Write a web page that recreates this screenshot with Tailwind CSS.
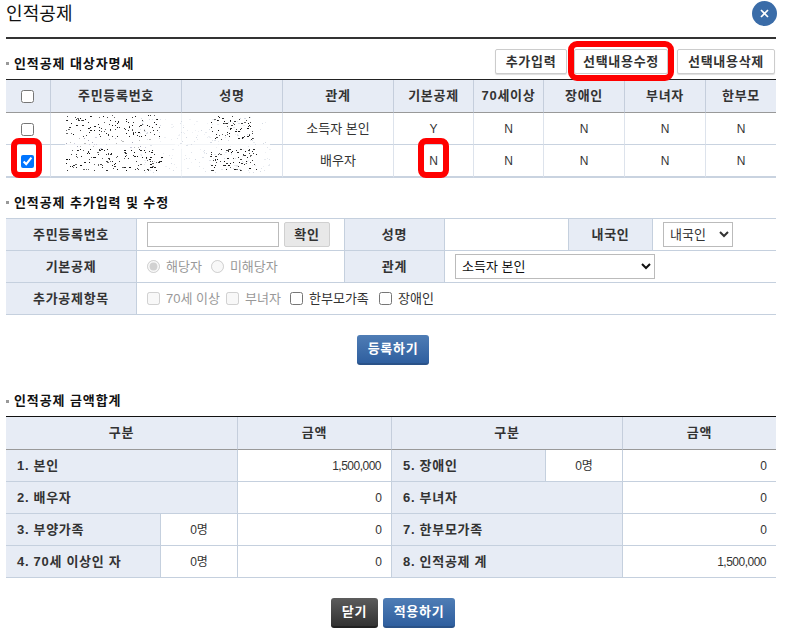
<!DOCTYPE html>
<html lang="ko">
<head>
<meta charset="utf-8">
<script src="https://cdn.jsdelivr.net/npm/@tailwindcss/browser@4"></script>
</head>
<body class="bg-white">
<div class="relative w-[787px] h-[634px] overflow-hidden pl-[6px] pr-[11px] text-[13px] text-[#333] font-['Liberation_Sans','Noto_Sans_CJK_KR',sans-serif]">

  <div class="flex justify-between items-start h-[39px] border-b-2 border-[#333]">
    <h1 class="text-[18px] leading-[29px] tracking-[0.1px] text-[#111] font-normal">인적공제</h1>
    <button class="w-[25px] h-[25px] mt-[1px] mr-[-1px] rounded-full bg-[#3a6ca8] flex items-center justify-center">
      <svg width="9" height="9" viewBox="0 0 9 9"><path d="M1 1L8 8M8 1L1 8" stroke="#fff" stroke-width="1.7" fill="none"/></svg>
    </button>
  </div>

  <div class="flex justify-between items-center h-[40px]">
    <h2 class="flex items-center gap-[5px] pt-[9px] text-[13px] font-bold tracking-[0.9px] text-[#111]"><span class="w-[3px] h-[3px] bg-[#999]"></span>인적공제 대상자명세</h2>
    <div class="flex pt-[5px] pr-[1px]">
      <button class="w-[72px] h-[25px] border border-[#ccc] rounded-[2px] bg-white font-bold tracking-[0.7px] shadow-[0_1px_1px_#ddd]">추가입력</button>
      <button class="w-[94px] h-[25px] ml-[7px] border border-[#ccc] rounded-[2px] bg-white font-bold tracking-[0.7px]">선택내용수정</button>
      <button class="w-[98px] h-[25px] ml-[9px] border border-[#ccc] rounded-[2px] bg-white font-bold tracking-[0.7px] shadow-[0_1px_1px_#ddd]">선택내용삭제</button>
    </div>
  </div>

  <table class="table-fixed w-[770px] border-separate border-spacing-0 border-t border-[#222] text-center">
    <colgroup><col class="w-[45px]"><col class="w-[131px]"><col class="w-[101px]"><col class="w-[111px]"><col class="w-[80px]"><col class="w-[70px]"><col class="w-[81px]"><col class="w-[81px]"><col class="w-[70px]"></colgroup>
    <thead>
      <tr class="h-[33px] bg-[#e7ecf5] font-bold tracking-[0.7px]">
        <th class="border-b border-[#999] border-r border-r-[#c5cedc] font-bold pr-[2px]"><input type="checkbox" class="align-middle w-[13px] h-[13px]"></th>
        <th class="border-b border-[#999] border-r border-r-[#c5cedc] font-bold">주민등록번호</th>
        <th class="border-b border-[#999] border-r border-r-[#c5cedc] font-bold">성명</th>
        <th class="border-b border-[#999] border-r border-r-[#c5cedc] font-bold">관계</th>
        <th class="border-b border-[#999] border-r border-r-[#c5cedc] font-bold">기본공제</th>
        <th class="border-b border-[#999] border-r border-r-[#c5cedc] font-bold">70세이상</th>
        <th class="border-b border-[#999] border-r border-r-[#c5cedc] font-bold">장애인</th>
        <th class="border-b border-[#999] border-r border-r-[#c5cedc] font-bold">부녀자</th>
        <th class="border-b border-[#999] font-bold">한부모</th>
      </tr>
    </thead>
    <tbody>
      <tr class="h-[32px]">
        <td class="border-b border-[#c9d3e0] border-r border-r-[#dde3ec] pr-[2px]"><input type="checkbox" class="align-middle w-[13px] h-[13px]"></td>
        <td class="border-b border-[#c9d3e0] border-r border-r-[#dde3ec]"></td>
        <td class="border-b border-[#c9d3e0] border-r border-r-[#dde3ec]"></td>
        <td class="border-b border-[#c9d3e0] border-r border-r-[#dde3ec]">소득자 본인</td>
        <td class="border-b border-[#c9d3e0] border-r border-r-[#dde3ec] text-[12px]">Y</td>
        <td class="border-b border-[#c9d3e0] border-r border-r-[#dde3ec] text-[12px]">N</td>
        <td class="border-b border-[#c9d3e0] border-r border-r-[#dde3ec] text-[12px]">N</td>
        <td class="border-b border-[#c9d3e0] border-r border-r-[#dde3ec] text-[12px]">N</td>
        <td class="border-b border-[#c9d3e0] text-[12px]">N</td>
      </tr>
      <tr class="h-[33px]">
        <td class="border-b-2 border-[#c9d3e0] border-r border-r-[#dde3ec] pr-[2px]"><input type="checkbox" checked class="align-middle w-[13px] h-[13px] accent-[#0075ff]"></td>
        <td class="border-b-2 border-[#c9d3e0] border-r border-r-[#dde3ec]"></td>
        <td class="border-b-2 border-[#c9d3e0] border-r border-r-[#dde3ec]"></td>
        <td class="border-b-2 border-[#c9d3e0] border-r border-r-[#dde3ec]">배우자</td>
        <td class="border-b-2 border-[#c9d3e0] border-r border-r-[#dde3ec] text-[12px]">N</td>
        <td class="border-b-2 border-[#c9d3e0] border-r border-r-[#dde3ec] text-[12px]">N</td>
        <td class="border-b-2 border-[#c9d3e0] border-r border-r-[#dde3ec] text-[12px]">N</td>
        <td class="border-b-2 border-[#c9d3e0] border-r border-r-[#dde3ec] text-[12px]">N</td>
        <td class="border-b-2 border-[#c9d3e0] text-[12px]">N</td>
      </tr>
    </tbody>
  </table>

  <h2 class="flex items-center gap-[5px] h-[40px] pt-[9px] text-[13px] font-bold tracking-[0.9px] text-[#111]"><span class="w-[3px] h-[3px] bg-[#999]"></span>인적공제 추가입력 및 수정</h2>

  <table class="table-fixed w-[770px] border-separate border-spacing-0 border-t border-[#c5d0de]">
    <colgroup><col class="w-[131px]"><col class="w-[208px]"><col class="w-[100px]"><col class="w-[123px]"><col class="w-[85px]"><col class="w-[123px]"></colgroup>
    <tbody>
      <tr class="h-[32px]">
        <th class="bg-[#e7ecf5] border-b border-r border-[#c5d0de] font-bold tracking-[0.7px]">주민등록번호</th>
        <td class="border-b border-r border-[#c5d0de] pl-[10px]">
          <div class="flex items-center gap-[5px]">
            <input type="text" class="w-[132px] h-[25px] border border-[#bbb] bg-white">
            <button class="w-[46px] h-[25px] border border-[#d0d0d0] rounded-[2px] bg-[#e8e8e8] font-bold tracking-[0.7px]">확인</button>
          </div>
        </td>
        <th class="bg-[#e7ecf5] border-b border-r border-[#c5d0de] font-bold tracking-[0.7px]">성명</th>
        <td class="border-b border-[#c5d0de]"></td>
        <th class="bg-[#e7ecf5] border-b border-l border-r border-[#c5d0de] font-bold tracking-[0.7px]">내국인</th>
        <td class="border-b border-[#c5d0de] pl-[10px]">
          <select class="block w-[70px] h-[25px] border border-[#bbb] bg-white text-[13px] pl-[2px]"><option>내국인</option></select>
        </td>
      </tr>
      <tr class="h-[32px]">
        <th class="bg-[#e7ecf5] border-b border-r border-[#c5d0de] font-bold tracking-[0.7px]">기본공제</th>
        <td class="border-b border-r border-[#c5d0de] pl-[10px]">
          <div class="flex items-center text-[#999] whitespace-nowrap">
            <input type="radio" checked disabled class="w-[13px] h-[13px]"><span class="ml-[6px]">해당자</span>
            <input type="radio" disabled class="w-[13px] h-[13px] ml-[9px]"><span class="ml-[6px]">미해당자</span>
          </div>
        </td>
        <th class="bg-[#e7ecf5] border-b border-r border-[#c5d0de] font-bold tracking-[0.7px]">관계</th>
        <td colspan="3" class="border-b border-[#c5d0de] pl-[10px]">
          <select class="block w-[200px] h-[25px] border border-[#bbb] bg-white text-[13px] text-[#111] pl-[2px]"><option>소득자 본인</option></select>
        </td>
      </tr>
      <tr class="h-[32px]">
        <th class="bg-[#e7ecf5] border-b border-r border-[#c5d0de] font-bold tracking-[0.7px]">추가공제항목</th>
        <td colspan="5" class="border-b border-[#c5d0de] pl-[10px]">
          <div class="flex items-center whitespace-nowrap">
            <input type="checkbox" disabled class="w-[13px] h-[13px]"><span class="ml-[6px] w-[51px] text-[#999]">70세 이상</span>
            <input type="checkbox" disabled class="w-[13px] h-[13px] ml-[9px]"><span class="ml-[6px] w-[36px] text-[#999]">부녀자</span>
            <input type="checkbox" class="w-[13px] h-[13px] ml-[9px]"><span class="ml-[6px] w-[60px]">한부모가족</span>
            <input type="checkbox" class="w-[13px] h-[13px] ml-[10px]"><span class="ml-[6px]">장애인</span>
          </div>
        </td>
      </tr>
    </tbody>
  </table>

  <div class="flex justify-center pt-[20px] h-[71px] pl-[4px]">
    <button class="w-[72px] h-[30px] rounded-[3px] bg-gradient-to-b from-[#4f7db5] to-[#2f5f9f] border-b-2 border-[#2a5288] text-white font-bold tracking-[0.7px]">등록하기</button>
  </div>

  <h2 class="flex items-center gap-[5px] h-[30px] text-[13px] font-bold tracking-[0.9px] text-[#111]"><span class="w-[3px] h-[3px] bg-[#999]"></span>인적공제 금액합계</h2>

  <table class="table-fixed w-[770px] border-separate border-spacing-0 border-t border-[#111]">
    <colgroup><col class="w-[155px]"><col class="w-[77px]"><col class="w-[154px]"><col class="w-[154px]"><col class="w-[77px]"><col class="w-[153px]"></colgroup>
    <thead>
      <tr class="h-[33px] bg-[#e7ecf5] text-center tracking-[0.7px]">
        <th colspan="2" class="border-b border-[#999] border-r border-r-[#c5cedc] font-bold">구분</th>
        <th class="border-b border-[#999] border-r border-r-[#c5cedc] font-bold">금액</th>
        <th colspan="2" class="border-b border-[#999] border-r border-r-[#c5cedc] font-bold">구분</th>
        <th class="border-b border-[#999] font-bold">금액</th>
      </tr>
    </thead>
    <tbody>
      <tr class="h-[32px]">
        <th colspan="2" class="bg-[#e7ecf5] border-b border-r border-[#c5d0de] text-left pl-[11px] font-bold tracking-[0.7px]">1. 본인</th>
        <td class="border-b border-r border-[#c5d0de] text-right pr-[10px] text-[12px] tracking-[-0.5px]">1,500,000</td>
        <th class="bg-[#e7ecf5] border-b border-r border-[#c5d0de] text-left pl-[11px] font-bold tracking-[0.7px]">5. 장애인</th>
        <td class="border-b border-r border-[#c5d0de] text-center text-[12px]">0명</td>
        <td class="border-b border-[#c5d0de] text-right pr-[9px] text-[12px]">0</td>
      </tr>
      <tr class="h-[32px]">
        <th colspan="2" class="bg-[#e7ecf5] border-b border-r border-[#c5d0de] text-left pl-[11px] font-bold tracking-[0.7px]">2. 배우자</th>
        <td class="border-b border-r border-[#c5d0de] text-right pr-[9px] text-[12px]">0</td>
        <th colspan="2" class="bg-[#e7ecf5] border-b border-r border-[#c5d0de] text-left pl-[11px] font-bold tracking-[0.7px]">6. 부녀자</th>
        <td class="border-b border-[#c5d0de] text-right pr-[9px] text-[12px]">0</td>
      </tr>
      <tr class="h-[32px]">
        <th class="bg-[#e7ecf5] border-b border-r border-[#c5d0de] text-left pl-[11px] font-bold tracking-[0.7px]">3. 부양가족</th>
        <td class="border-b border-r border-[#c5d0de] text-center text-[12px]">0명</td>
        <td class="border-b border-r border-[#c5d0de] text-right pr-[9px] text-[12px]">0</td>
        <th colspan="2" class="bg-[#e7ecf5] border-b border-r border-[#c5d0de] text-left pl-[11px] font-bold tracking-[0.7px]">7. 한부모가족</th>
        <td class="border-b border-[#c5d0de] text-right pr-[9px] text-[12px]">0</td>
      </tr>
      <tr class="h-[32px]">
        <th class="bg-[#e7ecf5] border-b border-r border-[#c5d0de] text-left pl-[11px] font-bold tracking-[0.7px]">4. 70세 이상인 자</th>
        <td class="border-b border-r border-[#c5d0de] text-center text-[12px]">0명</td>
        <td class="border-b border-r border-[#c5d0de] text-right pr-[9px] text-[12px]">0</td>
        <th colspan="2" class="bg-[#e7ecf5] border-b border-r border-[#c5d0de] text-left pl-[11px] font-bold tracking-[0.7px]">8. 인적공제 계</th>
        <td class="border-b border-[#c5d0de] text-right pr-[10px] text-[12px] tracking-[-0.5px]">1,500,000</td>
      </tr>
    </tbody>
  </table>

  <div class="flex justify-center gap-[5px] pt-[20px] pl-[4px]">
    <button class="w-[47px] h-[30px] rounded-[3px] bg-gradient-to-b from-[#5c5c5c] to-[#333] border-b-2 border-[#222] text-white font-bold tracking-[0.7px]">닫기</button>
    <button class="w-[72px] h-[30px] rounded-[3px] bg-gradient-to-b from-[#4f7db5] to-[#2f5f9f] border-b-2 border-[#2a5288] text-white font-bold tracking-[0.7px]">적용하기</button>
  </div>

  <svg id="noise" class="absolute left-[50px] top-[113px] pointer-events-none" width="232" height="64" viewBox="0 0 232 64"></svg>

  <div class="absolute left-[568px] top-[41px] w-[106px] h-[40px] border-[6px] border-[#f00] rounded-[9px]"></div>
  <div class="absolute left-[11px] top-[138px] w-[31px] h-[40px] border-[6px] border-[#f00] rounded-[8px]"></div>
  <div class="absolute left-[418px] top-[138px] w-[31px] h-[40px] border-[6px] border-[#f00] rounded-[8px]"></div>
</div>
<script>
(function(){
  var s=document.getElementById('noise'),seed=987654,out='';
  function r(){seed=(seed*1664525+1013904223)%4294967296;return seed/4294967296;}
  function dots(x0,x1,y0,y1,n,cols){
    for(var i=0;i<n;i++){
      var x=Math.floor(x0+r()*(x1-x0)),y=Math.floor(y0+r()*(y1-y0)),w=r()<.25?2:1;
      out+='<rect x="'+x+'" y="'+y+'" width="'+w+'" height="1" fill="'+cols[Math.floor(r()*cols.length)]+'"/>';
    }
  }
  out+='<rect x="15" y="28" width="205" height="8" fill="#fff" fill-opacity=".75"/>';
  out+='<rect x="125" y="0" width="12" height="63" fill="#fff" fill-opacity=".6"/>';
  var dark=['#111','#222','#333','#444','#666'],pale=['#dfe3ea','#e8ebf0','#d5dae3','#eef0f4'];
  dots(90,220,4,60,200,pale);
  dots(16,110,2,24,115,dark);
  dots(16,112,36,58,135,dark);
  dots(16,100,24,36,30,['#aab','#bbb','#ccd']);
  dots(160,205,3,28,65,dark);
  dots(160,207,36,58,75,dark);
  s.innerHTML=out;
})();
</script>
</body>
</html>
